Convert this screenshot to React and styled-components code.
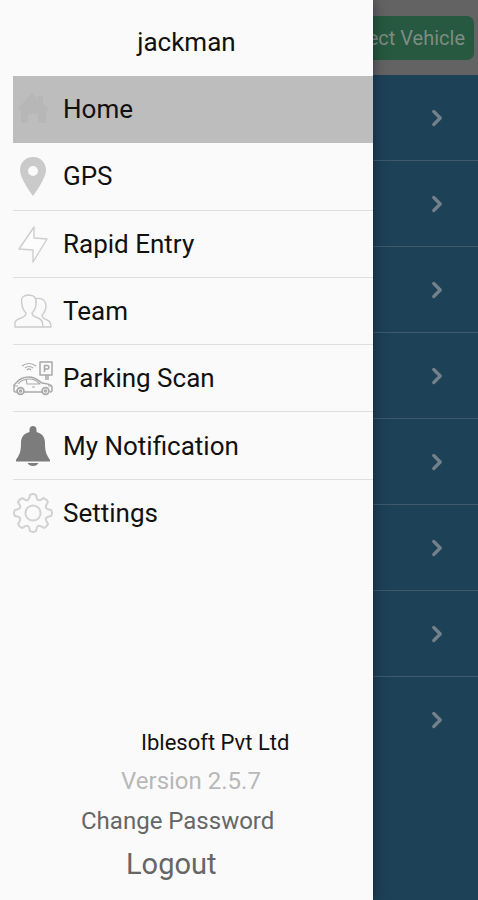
import React from "react";
import styled, { createGlobalStyle } from "styled-components";
import { FiChevronRight } from "react-icons/fi";

// Styled Components
const GlobalStyle = createGlobalStyle`
  * {
    box-sizing: border-box;
  }

  body {
    margin: 0;
    font-family: Roboto, "Liberation Sans", sans-serif;
  }
`;

const Screen = styled.div`
  position: relative;
  min-height: 100vh;
  background-color: #1d4157;
  overflow: hidden;
`;

const TopBar = styled.header`
  display: flex;
  align-items: center;
  justify-content: flex-end;
  height: 75px;
  padding-right: 4px;
  background-color: #636363;
`;

const VehicleButton = styled.button`
  height: 44px;
  padding: 0 9px;
  border: none;
  border-radius: 7px;
  background-color: #26593f;
  color: #7e8c84;
  font-family: inherit;
  font-size: 20px;
`;

const VehicleRow = styled.button`
  display: flex;
  align-items: center;
  justify-content: flex-end;
  width: 100%;
  height: 86px;
  padding: 0 28px 0 0;
  border: none;
  border-bottom: 1px solid ${(props) => (props.$last ? "transparent" : "#3f5a6d")};
  background: none;
  color: #74818c;
  font-size: 26px;

  svg {
    stroke-width: 3;
  }
`;

const Drawer = styled.aside`
  position: absolute;
  top: 0;
  bottom: 0;
  left: 0;
  display: flex;
  flex-direction: column;
  width: 78%;
  background-color: #fafafa;
  box-shadow: 0 0 12px rgba(0, 10, 30, 0.5);
`;

const UserName = styled.h1`
  margin: 0;
  padding-top: 10px;
  height: 76px;
  color: #111;
  font-size: 26px;
  font-weight: 400;
  line-height: 64px;
  text-align: center;
`;

const Menu = styled.nav`
  display: grid;
  grid-auto-rows: 1fr;
  height: 471px;
  padding-left: 13px;
`;

const MenuItem = styled.a`
  display: flex;
  align-items: center;
  gap: 10px;
  border-bottom: 1px solid ${(props) => (props.$active ? "#bdbdbd" : "#dedede")};
  background-color: ${(props) => (props.$active ? "#bdbdbd" : "transparent")};
  color: #111;
  font-size: 26px;
  text-decoration: none;

  &:last-child {
    border-bottom-color: transparent;
  }

  svg {
    flex: none;
    width: 40px;
    height: 40px;
  }
`;

const Footer = styled.footer`
  display: flex;
  flex-direction: column;
  align-items: flex-start;
  margin-top: auto;
  padding-bottom: 12px;
`;

const FooterText = styled.p`
  margin: 0 0 0 ${(props) => props.$indent}px;
  color: ${(props) => props.$color};
  font-size: ${(props) => props.$size}px;
  line-height: 39px;
`;

const FooterButton = styled.button`
  margin: 0 0 0 ${(props) => props.$indent}px;
  padding: 0;
  border: none;
  background: none;
  color: #666;
  font-family: inherit;
  font-size: ${(props) => props.$size}px;
  line-height: ${(props) => props.$line}px;
`;

// Icons
const HomeIcon = () => (
  <svg viewBox="0 0 40 40" fill="#b7b7b7" aria-hidden="true">
    <path d="M19 4 L25 10 V7 H30 V15 L36 21 H33 V34 H25 V25 H15 V34 H8 V21 H4 Z" />
  </svg>
);

const PinIcon = () => (
  <svg viewBox="0 0 40 40" fill="#cacaca" aria-hidden="true">
    <path
      fillRule="evenodd"
      d="M20 1 C12 1 7 7 7 14 C7 23 20 40 20 40 C20 40 33 23 33 14 C33 7 28 1 20 1 Z M20 10 A5 5 0 1 1 20 20 A5 5 0 1 1 20 10 Z"
    />
  </svg>
);

const BoltIcon = () => (
  <svg
    viewBox="0 0 40 40"
    fill="#fdfdfd"
    stroke="#cecece"
    strokeWidth="1.4"
    strokeLinejoin="round"
    aria-hidden="true"
  >
    <path d="M21 3 L6 25 L20 26 V38 L34 15 L21 14 Z" />
  </svg>
);

const TeamIcon = () => (
  <svg
    viewBox="0 0 40 40"
    fill="none"
    stroke="#cccccc"
    strokeWidth="1.4"
    strokeLinejoin="round"
    aria-hidden="true"
  >
    <path d="M2 36 V32 C2 29 5 28 8 27 C11 26 13 25 13 22 C10 19 9 17 9 13 C7 6 11 4 16 4 C21 4 24 7 23 13 C23 17 21 20 19 22 C19 25 22 26 25 27 C28 28 30 30 30 36 Z" />
    <path d="M22 8 C28 6 33 9 33 15 C33 20 31 22 29 24 C29 27 31 28 34 29 C37 30 38 32 38 36 H30" />
  </svg>
);

const ParkingIcon = () => (
  <svg
    viewBox="0 0 40 40"
    fill="none"
    stroke="#a9a9a9"
    strokeWidth="1.5"
    strokeLinejoin="round"
    aria-hidden="true"
  >
    <path d="M27 4 H39 V17 H27 Z M33 17 V22 M35 17 V22" />
    <path d="M31.5 14 V7.5 H34 C36.5 7.5 36.5 11 34 11 H31.5" />
    <path d="M9 8 Q16 3 23 8 M12 10 Q16 7 20 10 M14 12 Q16 10 18 12" strokeWidth="1.2" />
    <path d="M4 34 H2 Q1 34 1 32 V27 L3 25 C7 20 11 19 16 19 C22 19 25 22 29 25 C34 26 39 26 39 29 V32 Q39 34 37 34 M11 34 H29" />
    <path d="M5 26 C8 22 12 21 17 21 C21 21 24 23 27 26 L14 26 L13 21 M1 28 H5 M35 28 H39 M19 29 H22" strokeWidth="1.2" />
    <circle cx="7.5" cy="33" r="3.4" strokeWidth="1.8" />
    <circle cx="7.5" cy="33" r="1" />
    <circle cx="32.5" cy="33" r="3.4" strokeWidth="1.8" />
    <circle cx="32.5" cy="33" r="1" />
  </svg>
);

const BellIcon = () => (
  <svg viewBox="0 0 40 40" fill="#7c7c7c" aria-hidden="true">
    <path d="M20 0 C22 0 23.5 1.5 23.5 3.5 V6 C29 7.5 32 11 32 17 C32 27 34 29 37 34 V35.5 H3 V34 C6 29 8 27 8 17 C8 11 11 7.5 16.5 6 V3.5 C16.5 1.5 18 0 20 0 Z" />
    <path d="M14.5 37 H25.5 C24.5 39 22.5 40 20 40 C17.5 40 15.5 39 14.5 37 Z" />
  </svg>
);

// One tooth and the valley beside it, repeated around the hub
const GearIcon = () => (
  <svg
    viewBox="0 0 40 40"
    fill="none"
    stroke="#d2d2d2"
    strokeWidth="2"
    strokeLinecap="round"
    aria-hidden="true"
  >
    {[...Array(8)].map((_, i) => (
      <path
        key={i}
        d="M17 2 Q20 0 23 2 C24 8 25.7 8.7 30.6 5.1"
        transform={`rotate(${i * 45} 20 20)`}
      />
    ))}
    <circle cx="20" cy="20" r="7.6" />
  </svg>
);

// React Component
const App = () => {
  const menuItems = [
    { label: "Home", icon: HomeIcon },
    { label: "GPS", icon: PinIcon },
    { label: "Rapid Entry", icon: BoltIcon },
    { label: "Team", icon: TeamIcon },
    { label: "Parking Scan", icon: ParkingIcon },
    { label: "My Notification", icon: BellIcon },
    { label: "Settings", icon: GearIcon },
  ];

  return (
    <Screen>
      <GlobalStyle />
      <TopBar>
        <VehicleButton type="button">Select Vehicle</VehicleButton>
      </TopBar>
      <main>
        {[...Array(8)].map((_, i) => (
          <VehicleRow key={i} type="button" $last={i === 7} aria-label={`Row ${i + 1}`}>
            <FiChevronRight />
          </VehicleRow>
        ))}
      </main>
      <Drawer>
        <UserName>jackman</UserName>
        <Menu>
          {menuItems.map(({ label, icon: Icon }, index) => (
            <MenuItem key={label} href="#" $active={index === 0}>
              <Icon />
              {label}
            </MenuItem>
          ))}
        </Menu>
        <Footer>
          <FooterText $indent={141} $size={22} $color="#111">
            Iblesoft Pvt Ltd
          </FooterText>
          <FooterText $indent={121} $size={24} $color="#b8b8b8">
            Version 2.5.7
          </FooterText>
          <FooterButton type="button" $indent={81} $size={24} $line={40}>
            Change Password
          </FooterButton>
          <FooterButton type="button" $indent={126} $size={29} $line={47}>
            Logout
          </FooterButton>
        </Footer>
      </Drawer>
    </Screen>
  );
};

export default App;
